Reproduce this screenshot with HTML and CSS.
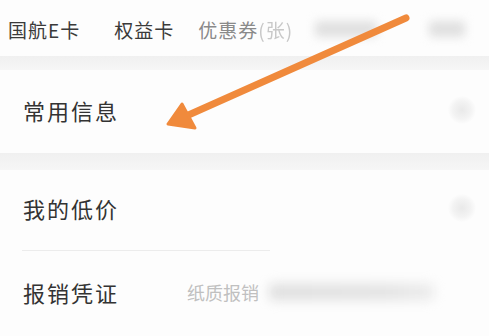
FILE: index.html
```html
<!DOCTYPE html>
<html lang="zh">
<head>
<meta charset="utf-8">
<link rel="stylesheet" href="styles.css">
</head>
<body>
<div class="page">
  <div class="tabs">
    <span class="tab t1">国航E卡</span>
    <span class="tab t2">权益卡</span>
    <span class="tab t3">优惠券<span class="fade">(张)</span></span>
    <span class="blob b1"></span>
    <span class="blob b2"></span>
  </div>
  <div class="gap g1"></div>
  <div class="section">
    <div class="row r1">
      <span class="label">常用信息</span>
      <span class="chev"></span>
    </div>
  </div>
  <div class="gap g2"></div>
  <div class="section">
    <div class="row r2">
      <span class="label">我的低价</span>
      <span class="chev"></span>
    </div>
    <div class="divider"></div>
    <div class="row r3">
      <span class="label">报销凭证</span>
      <span class="sub">纸质报销</span>
      <span class="subblur"></span>
    </div>
  </div>
  <svg class="arrow" width="489" height="336" viewBox="0 0 489 336">
    <line x1="406" y1="18" x2="184" y2="117" stroke="#f08a3c" stroke-width="7" stroke-linecap="round"/>
    <polygon points="168,124 182,104 195,128" fill="#f08a3c" stroke="#f08a3c" stroke-width="3" stroke-linejoin="round"/>
  </svg>
</div>
</body>
</html>
```
FILE: styles.css
```css
* { box-sizing: border-box; }
html, body { margin: 0; padding: 0; }
body {
  width: 489px;
  height: 336px;
  overflow: hidden;
  background: #fdfdfd;
  font-family: "Noto Sans CJK SC", "Noto Sans", sans-serif;
}
.page { position: relative; width: 489px; height: 336px; }
.tabs {
  height: 56px;
  display: flex;
  align-items: center;
  padding: 2px 0 0 8px;
  background: #fdfdfd;
}
.tab { font-size: 19px; letter-spacing: 1px; line-height: 1; }
.t1 { color: #3a3a3a; }
.t2 { color: #3a3a3a; margin-left: 34px; }
.t3 { color: #8a8a8a; margin-left: 24px; }
.fade { color: #c8c8c8; filter: blur(0.7px); }
.blob {
  height: 16px;
  background: #e0e0e0;
  filter: blur(5px);
  border-radius: 4px;
}
.b1 { width: 62px; margin-left: 22px; }
.b2 { width: 36px; margin-left: 52px; }
.gap { background: linear-gradient(#f0f0f0, #f6f6f6); }
.g1 { height: 14px; }
.g2 { height: 17px; }
.section { background: #fdfdfd; }
.row {
  display: flex;
  align-items: center;
  padding: 0 0 4px 23px;
  position: relative;
}
.r1 { height: 83px; }
.r2 { height: 80px; }
.r3 { height: 85px; }
.label { font-size: 22px; letter-spacing: 2px; color: #333; line-height: 1; }
.chev {
  position: absolute;
  right: 13px;
  top: 50%;
  width: 28px;
  height: 28px;
  margin-top: -16px;
  border-radius: 50%;
  background: radial-gradient(circle, #e9e9e9 0%, #f3f3f3 45%, rgba(253,253,253,0) 72%);
}
.divider { height: 1px; background: #ececec; margin-left: 22px; width: 248px; }
.sub { font-size: 18px; letter-spacing: 0; color: #c0c0c0; margin-left: 68px; line-height: 1; }
.subblur {
  width: 165px;
  height: 16px;
  margin-left: 10px;
  background: linear-gradient(90deg, #dedede, #e2e2e2 70%, #ebebeb);
  filter: blur(6px);
  border-radius: 4px;
}
.arrow { position: absolute; left: 0; top: 0; }
```
